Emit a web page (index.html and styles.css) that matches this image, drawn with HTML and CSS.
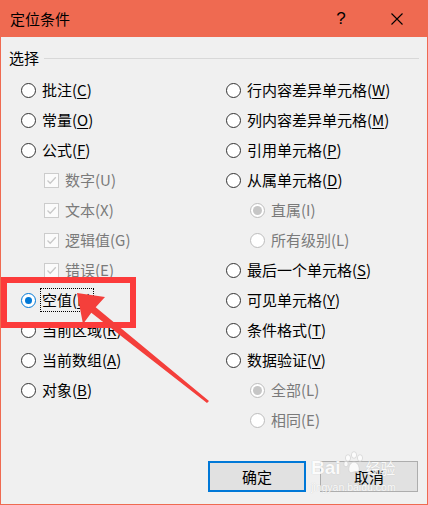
FILE: index.html
```html
<!DOCTYPE html>
<html lang="zh-CN">
<head>
<meta charset="utf-8">
<title>定位条件</title>
<link rel="stylesheet" href="styles.css">
</head>
<body>
<div class="window">
  <div class="titlebar">
    <span class="title">定位条件</span>
    <span class="help">?</span>
    <svg class="close" width="12" height="12" viewBox="0 0 12 12"><path d="M0.5 0.5 L11.5 11.5 M11.5 0.5 L0.5 11.5" stroke="#000" stroke-width="1.1" fill="none"/></svg>
  </div>
  <div class="content">
    <div class="group-head"><span class="group-label">选择</span><span class="rule"></span></div>
    <div class="options">
      <div class="col">
        <div class="opt"><span class="radio"></span><span>批注(<u>C</u>)</span></div>
        <div class="opt"><span class="radio"></span><span>常量(<u>O</u>)</span></div>
        <div class="opt"><span class="radio"></span><span>公式(<u>F</u>)</span></div>
        <div class="opt sub dis"><span class="check"><svg width="13" height="13" viewBox="0 0 13 13"><path d="M2.5 6.5 L5.2 9.3 L10.8 3.2" stroke="#c8c8c8" stroke-width="1.3" fill="none"/></svg></span><span>数字(U)</span></div>
        <div class="opt sub dis"><span class="check"><svg width="13" height="13" viewBox="0 0 13 13"><path d="M2.5 6.5 L5.2 9.3 L10.8 3.2" stroke="#c8c8c8" stroke-width="1.3" fill="none"/></svg></span><span>文本(X)</span></div>
        <div class="opt sub dis"><span class="check"><svg width="13" height="13" viewBox="0 0 13 13"><path d="M2.5 6.5 L5.2 9.3 L10.8 3.2" stroke="#c8c8c8" stroke-width="1.3" fill="none"/></svg></span><span>逻辑值(G)</span></div>
        <div class="opt sub dis"><span class="check"><svg width="13" height="13" viewBox="0 0 13 13"><path d="M2.5 6.5 L5.2 9.3 L10.8 3.2" stroke="#c8c8c8" stroke-width="1.3" fill="none"/></svg></span><span>错误(E)</span></div>
        <div class="opt"><span class="radio on"></span><span class="focus">空值(<u>K</u>)</span></div>
        <div class="opt"><span class="radio"></span><span>当前区域(<u>R</u>)</span></div>
        <div class="opt"><span class="radio"></span><span>当前数组(<u>A</u>)</span></div>
        <div class="opt"><span class="radio"></span><span>对象(<u>B</u>)</span></div>
      </div>
      <div class="col">
        <div class="opt"><span class="radio"></span><span>行内容差异单元格(<u>W</u>)</span></div>
        <div class="opt"><span class="radio"></span><span>列内容差异单元格(<u>M</u>)</span></div>
        <div class="opt"><span class="radio"></span><span>引用单元格(<u>P</u>)</span></div>
        <div class="opt"><span class="radio"></span><span>从属单元格(<u>D</u>)</span></div>
        <div class="opt sub2 dis"><span class="radio dis on"></span><span>直属(I)</span></div>
        <div class="opt sub2 dis"><span class="radio dis"></span><span>所有级别(L)</span></div>
        <div class="opt"><span class="radio"></span><span>最后一个单元格(<u>S</u>)</span></div>
        <div class="opt"><span class="radio"></span><span>可见单元格(<u>Y</u>)</span></div>
        <div class="opt"><span class="radio"></span><span>条件格式(<u>T</u>)</span></div>
        <div class="opt"><span class="radio"></span><span>数据验证(<u>V</u>)</span></div>
        <div class="opt sub2 dis"><span class="radio dis on"></span><span>全部(L)</span></div>
        <div class="opt sub2 dis"><span class="radio dis"></span><span>相同(E)</span></div>
      </div>
    </div>
    <div class="buttons">
      <button class="btn primary">确定</button>
      <button class="btn">取消</button>
    </div>
  </div>

  <div class="highlight"></div>
  <svg class="arrow" width="428" height="505" viewBox="0 0 428 505">
    <polygon points="77,293 105,297 95.7,307.3 209,401 207,403 91.3,312.7 83,324" fill="#f43f3b"/>
  </svg>

  <div class="watermark">
    <div class="wm-top">
      <span class="wm-bai">Bai</span>
      <svg class="wm-paw" width="22" height="24" viewBox="0 0 22 24">
        <g fill="#fff" stroke="#d0d0d0" stroke-width="0.8">
          <ellipse cx="5" cy="7" rx="2.6" ry="3.3"/>
          <ellipse cx="11" cy="4" rx="2.6" ry="3.3"/>
          <ellipse cx="17" cy="7" rx="2.6" ry="3.3"/>
          <ellipse cx="3" cy="13" rx="2.2" ry="2.8"/>
          <path d="M11 11 C7 11 5 17 6 20 C7 23 10 21 11 21 C12 21 15 23 16 20 C17 17 15 11 11 11 Z"/>
        </g>
      </svg>
      <span class="wm-jy">经验</span>
    </div>
    <div class="wm-url">jingyan.baidu.com</div>
  </div>
</div>
</body>
</html>
```

FILE: styles.css
```css
html, body {
  margin: 0;
  padding: 0;
  background: #f0f0f0;
}

.window {
  position: relative;
  width: 428px;
  height: 505px;
  display: flex;
  flex-direction: column;
  font-family: "Noto Sans CJK SC", "Microsoft YaHei", sans-serif;
  font-size: 15px;
  color: #000;
  background: #f0f0f0;
  overflow: hidden;
}

.titlebar {
  height: 37px;
  flex: none;
  background: #ef6a51;
  display: flex;
  align-items: center;
  padding: 0 25px 0 10px;
}

.title {
  flex: 1;
  line-height: 20px;
}

.help {
  width: 16px;
  text-align: center;
  font-family: "Liberation Sans", sans-serif;
  font-size: 17px;
  line-height: 20px;
  margin-right: 42px;
}

.close {
  display: block;
  flex: none;
}

.content {
  flex: 1;
  border: 1px solid #ef6a51;
  border-top: 0;
  display: flex;
  flex-direction: column;
}

.group-head {
  display: flex;
  align-items: center;
  height: 20px;
  margin: 11px 8px 0 8px;
}

.group-label {
  line-height: 20px;
}

.rule {
  flex: 1;
  height: 1px;
  background: #d8d8d8;
  margin-left: 5px;
}

.options {
  display: grid;
  grid-template-columns: 205px 1fr;
  margin-top: 7px;
  padding-left: 20px;
}

.col {
  display: flex;
  flex-direction: column;
}

.opt {
  height: 30px;
  display: flex;
  align-items: center;
  gap: 6px;
  white-space: nowrap;
  line-height: 20px;
}

.opt.sub {
  padding-left: 23px;
}

.opt.sub2 {
  padding-left: 24px;
}

.opt.dis {
  color: #7a7a7a;
}

u {
  text-decoration: underline;
  text-decoration-thickness: 1px;
  text-underline-offset: 2px;
}

.radio {
  width: 15px;
  height: 15px;
  box-sizing: border-box;
  border: 1px solid #333;
  border-radius: 50%;
  background: #fff;
  flex: none;
  display: flex;
  align-items: center;
  justify-content: center;
}

.radio.on {
  border-color: #0078d7;
}

.radio.on::after {
  content: "";
  width: 7px;
  height: 7px;
  border-radius: 50%;
  background: #0078d7;
}

.radio.dis {
  border-color: #bcbcbc;
}

.radio.dis.on::after {
  width: 9px;
  height: 9px;
  background: #c6c6c6;
}

.check {
  width: 15px;
  height: 15px;
  box-sizing: border-box;
  border: 1px solid #cccccc;
  background: #fbfbfb;
  flex: none;
  display: flex;
  align-items: center;
  justify-content: center;
}

.check svg {
  display: block;
}

.focus {
  outline: 1px dotted #000;
  padding: 0 1px;
  margin-left: -1px;
  line-height: 22px;
}

.buttons {
  display: flex;
  justify-content: flex-end;
  gap: 14px;
  padding-right: 9px;
  margin-top: 26px;
}

.btn {
  width: 98px;
  height: 31px;
  box-sizing: border-box;
  border: 1px solid #adadad;
  background: #e1e1e1;
  font-family: "Noto Sans CJK SC", sans-serif;
  font-size: 15px;
  color: #000;
  padding: 0;
  margin: 0;
}

.btn.primary {
  border: 2px solid #0078d7;
}

.highlight {
  position: absolute;
  left: 1px;
  top: 277px;
  width: 135px;
  height: 51px;
  box-sizing: border-box;
  border: 6px solid #fc3b3b;
  pointer-events: none;
}

.arrow {
  position: absolute;
  left: 0;
  top: 0;
  pointer-events: none;
}

.watermark {
  position: absolute;
  left: 311px;
  top: 450px;
  width: 92px;
  color: #fff;
  opacity: 0.85;
  pointer-events: none;
}

.wm-top {
  display: flex;
  align-items: flex-end;
  height: 28px;
}

.wm-bai {
  font-family: "Liberation Sans", sans-serif;
  font-weight: bold;
  font-size: 19px;
  line-height: 20px;
  text-shadow: 0 0 1px #bbb;
}

.wm-paw {
  display: block;
  margin: 0 1px 3px 2px;
}

.wm-jy {
  font-size: 15px;
  line-height: 20px;
  text-shadow: 0 0 1px #bbb;
}

.wm-url {
  font-family: "Liberation Sans", sans-serif;
  font-size: 10.5px;
  line-height: 12px;
  margin-top: 3px;
  text-shadow: 0 0 1px #bbb;
}
```
